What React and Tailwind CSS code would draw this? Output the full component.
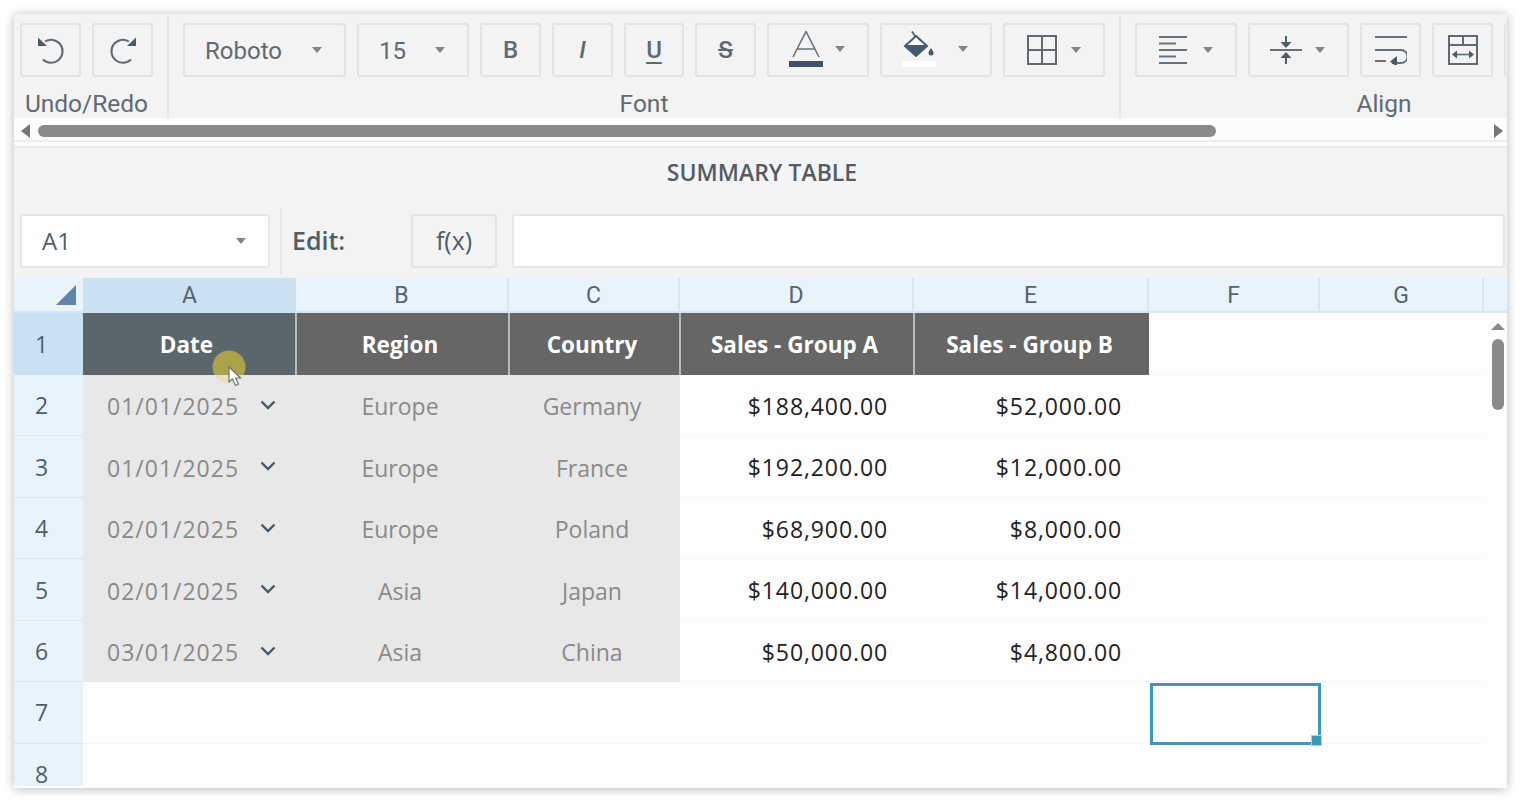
const columns = ["A", "B", "C", "D", "E", "F", "G"];
const headers = ["Date", "Region", "Country", "Sales - Group A", "Sales - Group B"];
const rows = [
  ["01/01/2025", "Europe", "Germany", "$188,400.00", "$52,000.00"],
  ["01/01/2025", "Europe", "France", "$192,200.00", "$12,000.00"],
  ["02/01/2025", "Europe", "Poland", "$68,900.00", "$8,000.00"],
  ["02/01/2025", "Asia", "Japan", "$140,000.00", "$14,000.00"],
  ["03/01/2025", "Asia", "China", "$50,000.00", "$4,800.00"],
];

const Caret = () => (
  <svg width="10" height="6" viewBox="0 0 10 6" className="shrink-0">
    <path d="M0 0h10L5 6z" fill="#858585" />
  </svg>
);

const UndoIcon = ({ flip }) => (
  <svg width="28" height="28" viewBox="0 0 28 28" className={flip ? "-scale-x-100" : ""}>
    <path d="M8 5.5A11.5 11.5 0 1 1 6 23.5" fill="none" stroke="#5f6a72" strokeWidth="2" />
    <path d="M1 1.5v8.5h9z" fill="#4f5b64" />
  </svg>
);

const ColorIcon = () => (
  <svg width="34" height="36" viewBox="0 0 34 36">
    <path d="M4 26L17 0.5 30 26M8 18h18" fill="none" stroke="#66717a" strokeWidth="1.6" />
    <rect y="30" width="34" height="6" fill="#3f5368" />
  </svg>
);

const FillIcon = () => (
  <svg width="34" height="36" viewBox="0 0 34 36">
    <path d="M10 0.5l4 6" stroke="#5f6a72" strokeWidth="2" />
    <path d="M14 5L25 15 14 25 3 15z" fill="#fff" stroke="#435a70" strokeWidth="2" />
    <path d="M3 14h22v1L14 25 3 15z" fill="#435a70" />
    <path d="M29 17c2 3 2.500 4 2.500 5a2.500 2.500 0 0 1-5 0c0-1 .5-2 2.500-5z" fill="#435a70" />
    <rect y="30" width="34" height="6" fill="#ffffff" />
  </svg>
);

const BorderIcon = () => (
  <svg width="30" height="30" viewBox="0 0 30 30">
    <path d="M1 1h28v28H1zM15 1v28M1 15h28" fill="none" stroke="#5f6a72" strokeWidth="2" />
  </svg>
);

const AlignIcon = () => (
  <svg width="28" height="30" viewBox="0 0 28 30">
    <path d="M0 2h28M0 8.500h17M0 15h28M0 21.500h17M0 28h28" fill="none" stroke="#66717a" strokeWidth="2" />
  </svg>
);

const ValignIcon = () => (
  <svg width="32" height="30" viewBox="0 0 32 30">
    <path d="M0 15h32" stroke="#66717a" strokeWidth="2" />
    <path d="M16 1v7M16 29v-7" stroke="#4f5b64" strokeWidth="2" />
    <path d="M10.500 7h11L16 13zM10.500 23h11L16 17z" fill="#4f5b64" />
  </svg>
);

const WrapIcon = () => (
  <svg width="32" height="30" viewBox="0 0 32 30">
    <path d="M0 2h32M0 15h26a6.500 6.500 0 0 1 0 13H17M0 26h11" fill="none" stroke="#66717a" strokeWidth="2" />
    <path d="M22 22v11l-7-5.500z" fill="#4f5b64" transform="translate(0 -1)" />
  </svg>
);

const MergeIcon = () => (
  <svg width="30" height="30" viewBox="0 0 30 30">
    <path d="M1 1h28v28H1zM1 10h28M15 1v9" fill="none" stroke="#5f6a72" strokeWidth="2" />
    <path d="M7 19.500h16" stroke="#5f6a72" strokeWidth="1.600" />
    <path d="M9 15.500v8l-5-4zM21 15.500v8l5-4z" fill="#4f5b64" />
  </svg>
);

const ToolButton = ({ className = "", children }) => (
  <button className={`h-[54px] shrink-0 flex items-center justify-center pb-[1px] rounded-[3px] border-2 border-[#e3e3e3] text-[#5f6a72] ${className}`}>
    {children}
  </button>
);

const DropButton = ({ className = "", children }) => (
  <ToolButton className={`!justify-between pl-[20px] pr-[22px] ${className}`}>
    {children}
    <Caret />
  </ToolButton>
);

const ToolGroup = ({ label, className = "", rowClass = "", labelClass = "", children }) => (
  <div className={`shrink-0 flex flex-col h-full pt-[9px] border-r-2 border-[#e6e6e6] ${className}`}>
    <div className={`flex gap-[11px] ${rowClass}`}>{children}</div>
    <div className={`text-center text-[24.5px] leading-[26px] mt-[14px] text-[#5f6a72] ${labelClass}`}>{label}</div>
  </div>
);

const Toolbar = () => (
  <div className="h-[104px] flex overflow-hidden bg-[#f3f3f3] font-['Roboto',sans-serif]">
    <ToolGroup label="Undo/Redo" className="w-[155px]" rowClass="pl-[6px]" labelClass="pr-[8px] whitespace-nowrap">
      <ToolButton className="w-[61px]"><UndoIcon /></ToolButton>
      <ToolButton className="w-[61px]"><UndoIcon flip /></ToolButton>
    </ToolGroup>
    <ToolGroup label="Font" className="w-[952px]" rowClass="pl-[14px]">
      <DropButton className="w-[163px] text-[24px]"><span className="pt-[2px]">Roboto</span></DropButton>
      <DropButton className="w-[112px] text-[24px]"><span className="pt-[2px]">15</span></DropButton>
      <ToolButton className="w-[61px] text-[24px] font-medium">B</ToolButton>
      <ToolButton className="w-[61px] text-[24px] font-medium italic">I</ToolButton>
      <ToolButton className="w-[60px] text-[24px] font-medium underline underline-offset-4">U</ToolButton>
      <ToolButton className="w-[61px] text-[24px] font-medium line-through">S</ToolButton>
      <DropButton className="w-[102px] !pb-[2px]"><ColorIcon /></DropButton>
      <DropButton className="w-[112px] !pb-[2px]"><FillIcon /></DropButton>
      <DropButton className="w-[102px] !pl-[22px]"><BorderIcon /></DropButton>
    </ToolGroup>
    <ToolGroup label="Align" className="w-[528px] border-r-0" rowClass="pl-[14px]">
      <DropButton className="w-[102px] !pl-[22px]"><AlignIcon /></DropButton>
      <DropButton className="w-[101px]"><ValignIcon /></DropButton>
      <ToolButton className="w-[61px]"><WrapIcon /></ToolButton>
      <ToolButton className="w-[61px]"><MergeIcon /></ToolButton>
      <ToolButton className="w-[61px]" />
    </ToolGroup>
  </div>
);

const ToolbarScroll = () => (
  <div className="h-[24px] flex items-center pt-[4px] pl-[7px] pr-[4px] gap-[8px] bg-[#fcfcfc] border-b-2 border-[#eeeeee]">
    <svg width="9" height="14" viewBox="0 0 9 14"><path d="M9 0v14L0 7z" fill="#777" /></svg>
    <div className="h-[12px] w-[1178px] rounded-full bg-[#8a8a8a]" />
    <svg width="9" height="14" viewBox="0 0 9 14" className="ml-auto"><path d="M0 0v14l9-7z" fill="#777" /></svg>
  </div>
);

const FormulaBar = () => (
  <div className="h-[74px] flex items-center pl-[6px] pr-[2px] bg-[#f3f3f3] font-['Open_Sans',sans-serif] text-[#4f5d6b]">
    <div className="w-[250px] h-[54px] flex items-center justify-between pl-[20px] pr-[22px] rounded-[3px] border-2 border-[#e2e8ee] bg-[#fdfdfd] text-[24px]">
      A1
      <Caret />
    </div>
    <div className="w-[2px] h-[66px] ml-[10px] bg-[#e6e6e6]" />
    <div className="w-[129px] pl-[10px] text-[25px] font-semibold">Edit:</div>
    <button className="w-[86px] h-[54px] rounded-[3px] border-2 border-[#e3e3e3] text-[25px]">f(x)</button>
    <div className="flex-1 h-[54px] ml-[15px] rounded-[3px] border-2 border-[#e2e8ee] bg-[#fdfdfd]" />
  </div>
);

const Row = ({ number, row }) => (
  <>
    <div className="flex items-center justify-center pt-[1px] pr-[14px] bg-[#e8f3fb] border-b border-[#d7e6f1] text-[#4f5d6b]">{number}</div>
    <div className="flex items-center justify-between pt-[2px] pl-[24px] pr-[20px] bg-[#e8e8e8] text-[#8a8a8a] tracking-[1px]">
      {row[0]}
      <svg width="16" height="10" viewBox="0 0 16 10" className="mb-[3px]">
        <path d="M1.500 1.500L8 8l6.500-6.500" fill="none" stroke="#4a5866" strokeWidth="2.400" />
      </svg>
    </div>
    <div className="flex items-center justify-center pt-[2px] pr-[5px] bg-[#e8e8e8] text-[#8a8a8a]">{row[1]}</div>
    <div className="flex items-center justify-center pt-[2px] pr-[5px] bg-[#e8e8e8] text-[#8a8a8a]">{row[2]}</div>
    <div className="flex items-center justify-end pt-[2px] pr-[26px] text-[#222222] tracking-[0.9px] border-b border-[#f5f5f5]">{row[3]}</div>
    <div className="flex items-center justify-end pt-[2px] pr-[27px] text-[#222222] tracking-[0.9px] border-b border-[#f5f5f5]">{row[4]}</div>
    <div className="col-span-2 border-b border-[#f5f5f5]" />
    <div />
  </>
);

const Grid = () => (
  <div className="relative flex-1 overflow-hidden bg-[#fdfdfd] font-['Open_Sans',sans-serif] text-[23px]">
    <div className="grid grid-cols-[69px_213px_213px_171px_234px_235px_171px_164px_23px] grid-rows-[35px] auto-rows-[61.5px]">
      {/* column header row */}
      <div className="flex items-center justify-end pt-[1px] pr-[7px] bg-[#e8f3fb] border-b-2 border-[#d7e6f1]">
        <svg width="20" height="20" viewBox="0 0 20 20"><path d="M20 0v20H0z" fill="#5f86a8" /></svg>
      </div>
      {columns.map((col) => (
        <div
          key={col}
          className={`flex items-center justify-center pt-[4px] text-[23px] text-[#55636f] font-['Roboto',sans-serif] border-b-2 ${
            col === "A" ? "bg-[#c9e1f2] border-[#c9e1f2]" : "bg-[#e8f3fb] border-r-2 border-[#d7e6f1]"
          }`}
        >
          {col}
        </div>
      ))}
      <div className="bg-[#e8f3fb] border-b-2 border-[#d7e6f1]" />

      {/* row 1: table header */}
      <div className="flex items-center justify-center pr-[14px] bg-[#c9e1f2] text-[#4f5d6b]">1</div>
      {headers.map((title, i) => (
        <div
          key={title}
          className={`flex items-center justify-center pt-[3px] pr-[5px] font-bold text-[22.5px] text-white border-x border-[#b5bbbf] ${
            i === 0 ? "bg-[#5b666c] !border-l-0" : i === 4 ? "bg-[#666666] !border-r-0" : "bg-[#666666]"
          }`}
        >
          {title}
        </div>
      ))}
      <div className="col-span-2 border-b border-[#f5f5f5]" />
      <div />

      {/* data rows */}
      {rows.map((row, r) => (
        <Row key={r} number={r + 2} row={row} />
      ))}

      {/* empty rows */}
      <div className="flex items-center justify-center pr-[14px] bg-[#e8f3fb] border-b border-[#d7e6f1] text-[#4f5d6b]">7</div>
      <div className="col-span-5 border-b border-[#f5f5f5]" />
      <div className="relative translate-x-px translate-y-px border-[3px] border-[#3d97bd]">
        <div className="absolute -right-[4px] -bottom-[4px] w-[11px] h-[11px] bg-[#3d97bd] border border-[#a9d2e4]" />
      </div>
      <div className="border-b border-[#f5f5f5]" />
      <div />
      <div className="h-[42px] pt-[19px] pr-[14px] text-center leading-[22px] bg-[#e8f3fb] text-[#4f5d6b]">8</div>
    </div>

    {/* vertical scrollbar */}
    <div className="absolute top-[45px] right-[2px] flex flex-col items-center gap-[9px]">
      <svg width="14" height="7" viewBox="0 0 14 7"><path d="M0 7h14L7 0z" fill="#8a8a8a" /></svg>
      <div className="w-[12px] h-[71px] rounded-full bg-[#8a8a8a]" />
    </div>

    {/* mouse pointer highlight */}
    <svg width="40" height="50" viewBox="0 0 40 50" className="absolute left-[195px] top-[72px]">
      <defs>
        <clipPath id="upper"><rect width="40" height="25" /></clipPath>
        <clipPath id="lower"><rect y="25" width="40" height="20" /></clipPath>
      </defs>
      <circle cx="20" cy="17" r="16.500" fill="#aca24c" clipPath="url(#upper)" />
      <circle cx="20" cy="17" r="16.500" fill="#e9e0c4" clipPath="url(#lower)" />
      <path d="M20 17v15l3.500-3 3 6.500 3-1.500-3-6h5z" fill="#fff" stroke="#6f7478" strokeWidth="1.200" />
    </svg>
  </div>
);

const App = () => {
  return (
    <div className="h-[804px] bg-white pt-[14px] pl-[14px] overflow-hidden">
      <div className="w-[1493px] h-[774px] flex flex-col overflow-hidden bg-[#fdfdfd] shadow-[0_1px_10px_rgba(0,0,0,0.28)]">
        <Toolbar />
        <ToolbarScroll />
        <div className="h-[58px] mt-[4px] pb-[8px] pl-[3px] flex items-center justify-center bg-[#f2f4f5] border-t-2 border-[#eceeef] font-['Open_Sans',sans-serif] font-semibold text-[23px] text-[#555b60]">
          SUMMARY TABLE
        </div>
        <FormulaBar />
        <Grid />
      </div>
    </div>
  );
};

export default App;
